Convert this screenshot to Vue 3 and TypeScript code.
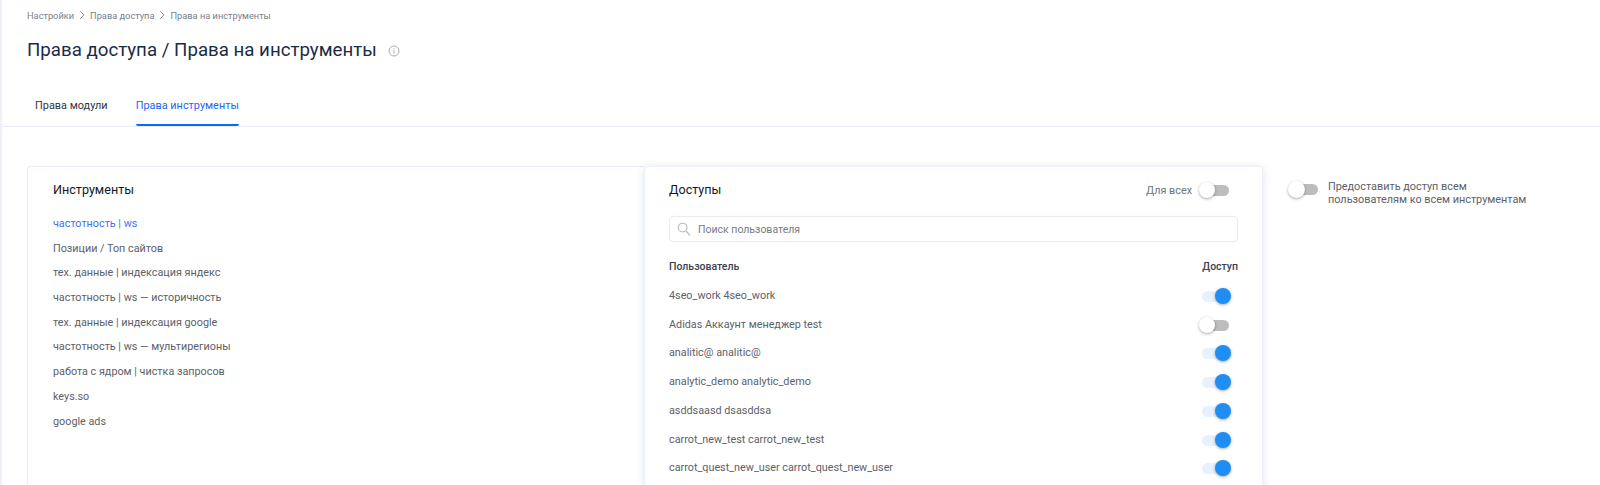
<script setup lang="ts">
const tools: string[] = [
  'частотность | ws',
  'Позиции / Топ сайтов',
  'тех. данные | индексация яндекс',
  'частотность | ws — историчность',
  'тех. данные | индексация google',
  'частотность | ws — мультирегионы',
  'работа с ядром | чистка запросов',
  'keys.so',
  'google ads',
]
const users: { name: string; on: boolean }[] = [
  { name: '4seo_work 4seo_work', on: true },
  { name: 'Adidas Аккаунт менеджер test', on: false },
  { name: 'analitic@ analitic@', on: true },
  { name: 'analytic_demo analytic_demo', on: true },
  { name: 'asddsaasd dsasddsa', on: true },
  { name: 'carrot_new_test carrot_new_test', on: true },
  { name: 'carrot_quest_new_user carrot_quest_new_user', on: true },
]
</script>

<template>
  <div class="page">
    <header class="head">
      <nav class="crumbs">
        <span>Настройки</span>
        <svg class="sep" viewBox="0 0 8 10" width="8" height="10"><path d="M2 1l4 4-4 4" fill="none" stroke="#9a9fa8" stroke-width="1" /></svg>
        <span>Права доступа</span>
        <svg class="sep" viewBox="0 0 8 10" width="8" height="10"><path d="M2 1l4 4-4 4" fill="none" stroke="#9a9fa8" stroke-width="1" /></svg>
        <span>Права на инструменты</span>
      </nav>
      <div class="title-row">
        <h1>Права доступа / Права на инструменты</h1>
        <svg class="info" viewBox="0 0 12 12" width="12" height="12">
          <circle cx="6" cy="6" r="5" fill="none" stroke="#a9adb3" stroke-width="1" />
          <path d="M6 5.2v3.4M6 3.2v1" stroke="#a9adb3" stroke-width="1" fill="none" />
        </svg>
      </div>
    </header>
    <div class="tabs">
      <div class="tab">Права модули</div>
      <div class="tab active">Права инструменты</div>
    </div>
    <main class="content">
      <section class="tools">
        <h2>Инструменты</h2>
        <ul>
          <li v-for="(t, i) in tools" :key="t" :class="{ current: i === 0 }">{{ t }}</li>
        </ul>
      </section>
      <section class="access">
        <div class="access-head">
          <h2>Доступы</h2>
          <div class="for-all">
            <span>Для всех</span>
            <span class="switch"><i></i></span>
          </div>
        </div>
        <div class="search">
          <svg viewBox="0 0 14 14" width="14" height="14">
            <circle cx="5.6" cy="5.6" r="4.4" fill="none" stroke="#b4b7bc" stroke-width="1.1" />
            <path d="M9 9l4 4.4" stroke="#b4b7bc" stroke-width="1.2" fill="none" />
          </svg>
          <span>Поиск пользователя</span>
        </div>
        <div class="thead"><span>Пользователь</span><span>Доступ</span></div>
        <div v-for="u in users" :key="u.name" class="row">
          <span>{{ u.name }}</span>
          <span class="switch" :class="{ on: u.on }"><i></i></span>
        </div>
      </section>
      <aside class="global">
        <span class="switch big"><i></i></span>
        <p>Предоставить доступ всем<br />пользователям ко всем инструментам</p>
      </aside>
    </main>
  </div>
</template>

<style>
html, body { margin: 0; background: #fff; overflow: hidden; }
</style>

<style scoped>
.page {
  height: 485px;
  overflow: hidden;
  box-sizing: border-box;
  border-left: 2px solid #eff1f8;
  font-family: Roboto, "Liberation Sans", sans-serif;
  color: #4a4f57;
}
.head { padding: 8px 0 0 25px; }
.crumbs {
  display: flex;
  align-items: center;
  gap: 4px;
  height: 14px;
  font-size: 9.25px;
  color: #7b8088;
}
.sep { flex: none; }
.title-row {
  display: flex;
  align-items: center;
  gap: 11px;
  margin-top: 13px;
  height: 30px;
}
h1 {
  margin: 0;
  font-size: 18.7px;
  font-weight: 400;
  color: #1c2b45;
}
.info { margin-top: 1px; }
.tabs {
  display: flex;
  gap: 28px;
  margin-top: 25px;
  padding-left: 33px;
  height: 36px;
  border-bottom: 1px solid #e9ecf4;
  font-size: 10.9px;
}
.tab {
  height: 36px;
  box-sizing: border-box;
  line-height: 32px;
  color: #2e3540;
}
.tab.active {
  color: #1e66f5;
  border-bottom: 2px solid #0f66f7;
  border-radius: 0 0 2px 2px;
}
.content {
  display: flex;
  align-items: flex-start;
  padding: 39px 0 0 25px;
}
.tools {
  width: 617px;
  height: 340px;
  flex: none;
  box-sizing: border-box;
  padding: 15px 0 0 25px;
  border: 1px solid #e9ecf6;
  border-right: 0;
  border-radius: 4px 0 0 0;
}
h2 {
  margin: 0;
  font-size: 12.6px;
  font-weight: 400;
  color: #14181f;
  line-height: 16px;
}
ul { list-style: none; margin: 14px 0 0; padding: 0; }
li {
  height: 24.7px;
  line-height: 24.7px;
  font-size: 10.8px;
  color: #5c6168;
}
li.current { color: #3d74f5; }
.access {
  width: 619px;
  height: 340px;
  flex: none;
  box-sizing: border-box;
  padding: 14px 24px 0 24px;
  border-radius: 4px;
  border: 1px solid #edf0f8;
  background: #fff;
  box-shadow: 0 1px 8px rgba(60, 80, 150, 0.14);
}
.access-head {
  display: flex;
  align-items: center;
  justify-content: space-between;
  height: 18px;
}
.for-all {
  display: flex;
  align-items: center;
  gap: 10px;
  font-size: 10.8px;
  color: #6f747b;
  padding-right: 9px;
}
.search {
  display: flex;
  align-items: center;
  gap: 7px;
  height: 26px;
  margin-top: 17px;
  padding-left: 7px;
  box-sizing: border-box;
  border: 1px solid #e8ebf4;
  border-radius: 4px;
  font-size: 10.5px;
  color: #767b82;
}
.thead {
  display: flex;
  justify-content: space-between;
  margin-top: 18px;
  height: 14px;
  line-height: 14px;
  font-size: 10.5px;
  font-weight: 500;
  color: #3a4250;
}
.row {
  display: flex;
  align-items: center;
  justify-content: space-between;
  height: 28.75px;
  font-size: 10.8px;
  color: #5c6168;
  padding-right: 9px;
}
.thead + .row { margin-top: 7px; }
.switch {
  position: relative;
  display: inline-block;
  flex: none;
  width: 27px;
  height: 11px;
  border-radius: 6px;
  background: #bdbdbd;
}
.row .switch { top: 1px; }
.switch i {
  position: absolute;
  left: -3px;
  top: -3px;
  width: 16px;
  height: 16px;
  border-radius: 50%;
  background: #fff;
  box-shadow: 0 1px 3px rgba(0, 0, 0, 0.35);
}
.switch.on { background: #e6f2fd; }
.switch.on i { left: auto; right: -2px; background: #1e8ef2; }
.global {
  display: flex;
  align-items: flex-start;
  gap: 10px;
  margin-left: 25px;
  padding-top: 18px;
}
.global p {
  margin: -3px 0 0;
  font-size: 10.85px;
  line-height: 12.5px;
  color: #5c6168;
}
.switch.big { margin-left: 3px; }
.switch.big i { width: 17px; height: 17px; }
</style>
